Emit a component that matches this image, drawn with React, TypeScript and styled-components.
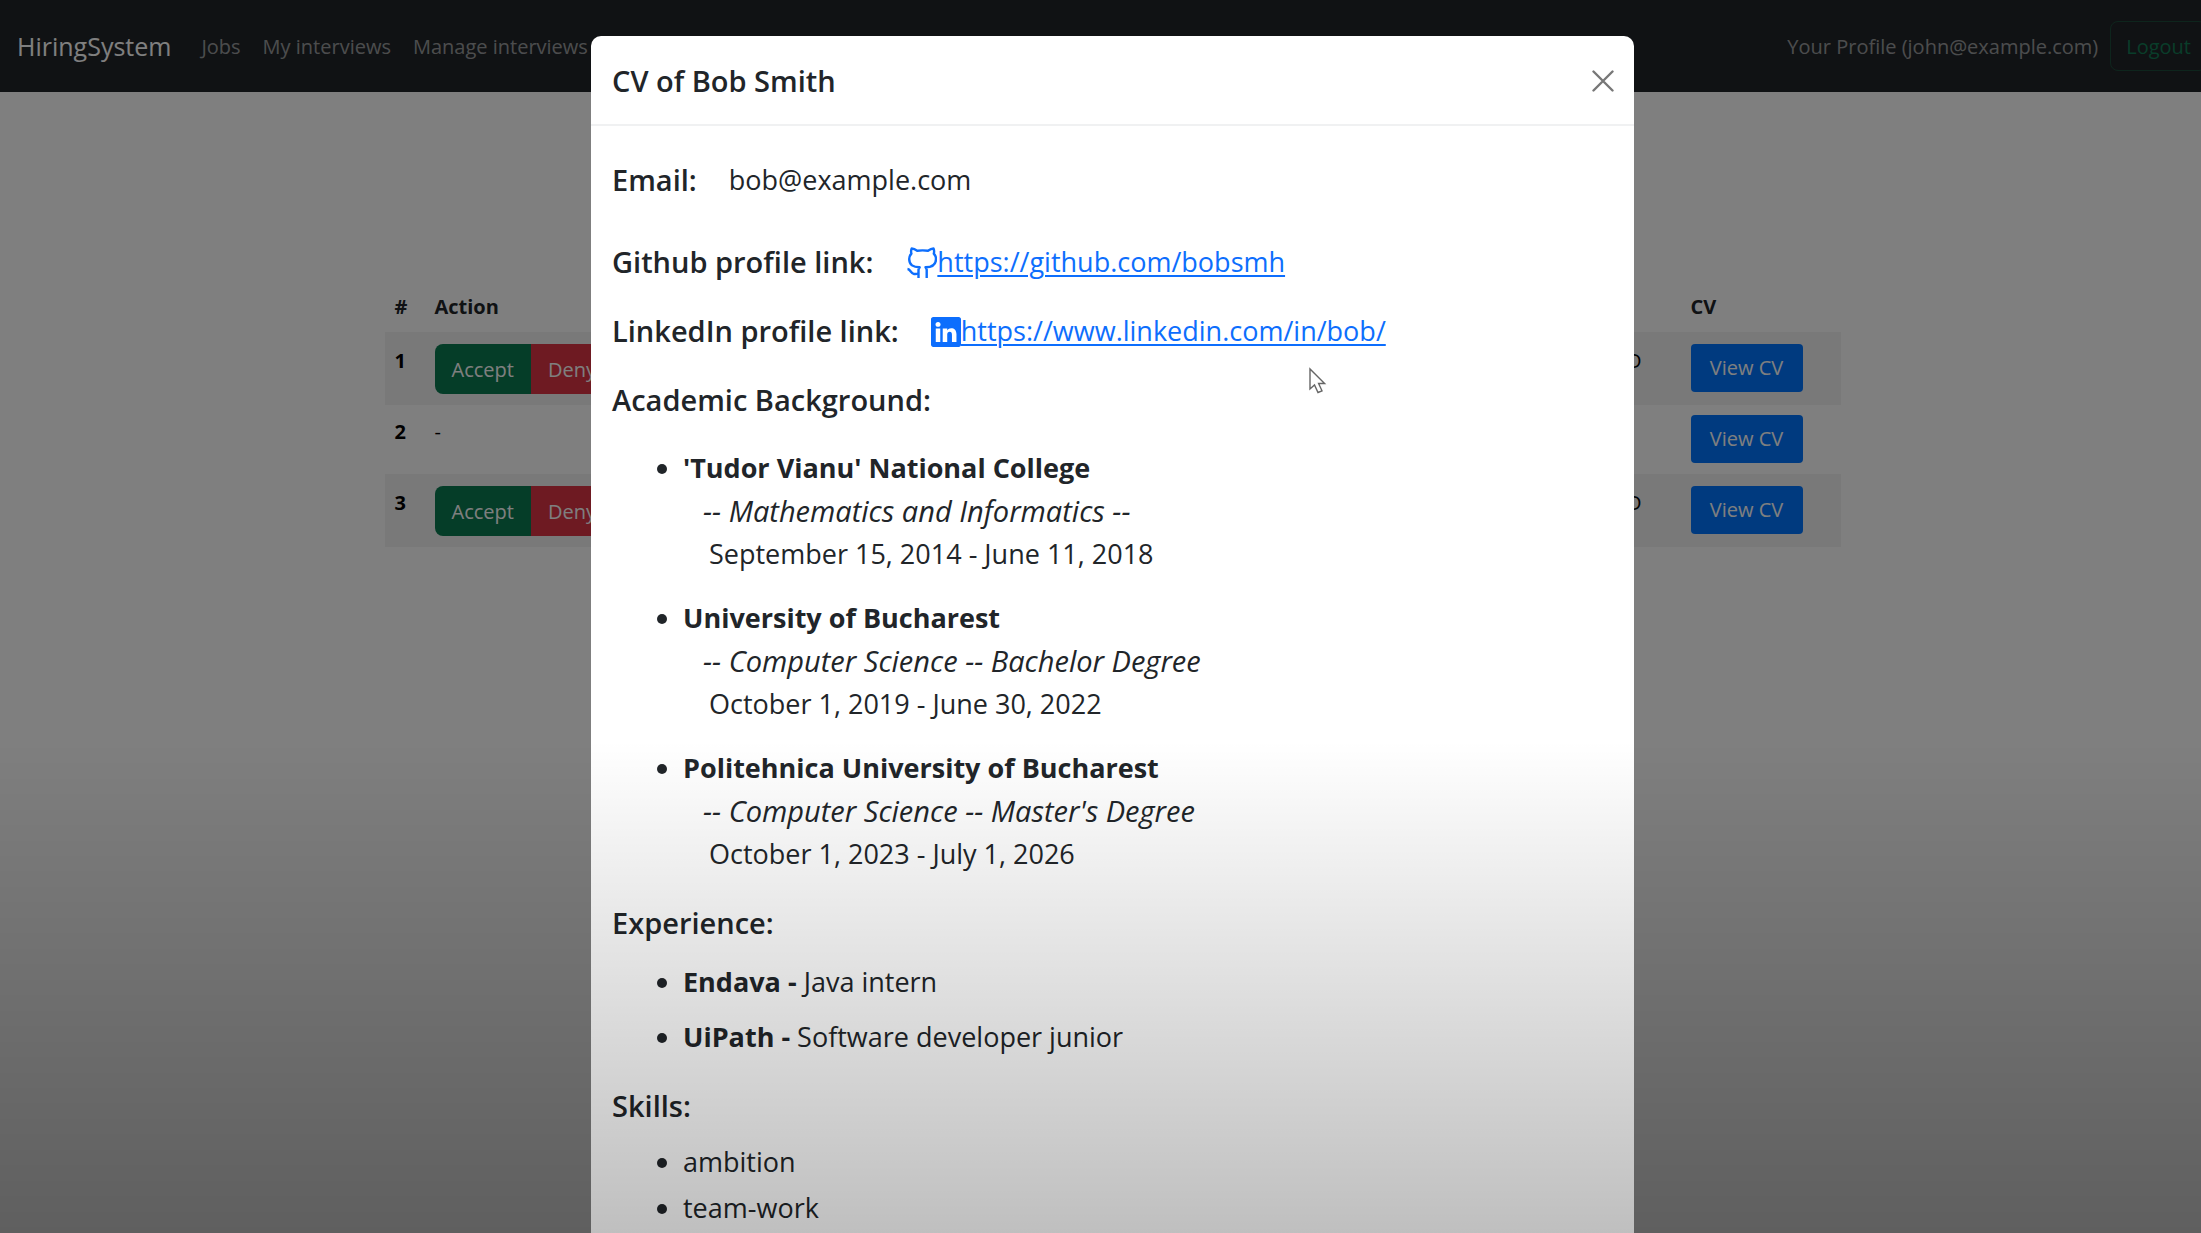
import React from "react";
import styled, { createGlobalStyle } from "styled-components";
import { BsLinkedin } from "react-icons/bs";

const GlobalStyle = createGlobalStyle`
  *, *::before, *::after { box-sizing: border-box; }
  html, body { margin: 0; overflow: hidden; background: #fff; }
  body {
    font-family: "Open Sans", "Noto Sans", sans-serif;
    font-size: 20px;
    line-height: 31px;
    color: #212529;
  }
  button { font: inherit; }
`;

const GUTTER = 24;

const Page = styled.div`
  width: calc(100% + ${GUTTER}px);
  min-height: 100vh;
`;

const Navbar = styled.nav`
  display: flex;
  align-items: center;
  height: 92px;
  padding: 0 18px 0 17px;
  background: #212529;
`;

const Brand = styled.a`
  margin-right: 30px;
  font-size: 25px;
  color: #fff;
  text-decoration: none;
`;

const NavLinks = styled.div`
  display: flex;
  flex: 1;
  gap: 22px;
`;

const NavLink = styled.a`
  color: rgba(255, 255, 255, 0.55);
  text-decoration: none;
`;

const LogoutButton = styled.button`
  height: 50px;
  margin-left: 12px;
  padding: 0 15px;
  border: 1px solid #1d4a3a;
  border-radius: 8px;
  background: transparent;
  color: #137a54;
`;

const Main = styled.main`
  display: flex;
  justify-content: center;
  padding-top: 189px;
`;

const Table = styled.table`
  width: 66%;
  max-width: 1456px;
  border-collapse: collapse;
  table-layout: fixed;
`;

const HeadCell = styled.th<{ $width?: number }>`
  width: ${(p) => (p.$width ? `${p.$width}px` : "auto")};
  height: 50px;
  padding: 10px;
  text-align: left;
  font-weight: 700;
`;

const Row = styled.tr<{ $striped?: boolean }>`
  height: ${(p) => (p.$striped ? 73 : 69)}px;
  background: ${(p) => (p.$striped ? "rgba(0, 0, 0, 0.05)" : "transparent")};
  color: #000;
  line-height: 34px;

  > * {
    padding: ${(p) => (p.$striped ? 12 : 10)}px 10px 0;
    vertical-align: top;
    text-align: left;
  }
`;

const CurrencyText = styled.div`
  padding-right: 29px;
  text-align: right;
`;

const ButtonGroup = styled.div`
  display: flex;
  width: fit-content;
  overflow: hidden;
  border-radius: 8px;
`;

const ActionButton = styled.button<{ $tone: "accept" | "deny" }>`
  height: 50px;
  padding: 2px 17px 0;
  border: 0;
  background: ${(p) => (p.$tone === "accept" ? "#0a7a50" : "#dc3545")};
  color: #fff;
`;

const ViewButton = styled.button`
  display: block;
  width: 112px;
  height: 48px;
  padding: 0;
  border: 0;
  border-radius: 4px;
  background: #0075ff;
  color: #fff;
`;

const Backdrop = styled.div`
  position: fixed;
  inset: 0 -${GUTTER}px 0 0;
  display: flex;
  justify-content: center;
  align-items: flex-start;
  padding-top: 36px;
  overflow: hidden;
  background: rgba(0, 0, 0, 0.5);
`;

const Dialog = styled.section`
  width: 100%;
  max-width: 1043px;
  border-radius: 10px;
  background: #fff;
`;

const DialogHeader = styled.header`
  display: flex;
  align-items: center;
  justify-content: space-between;
  padding: 22px 20px 20px 21px;
  border-bottom: 2px solid #f0f1f2;
`;

const DialogTitle = styled.h1`
  margin: 0;
  font-size: 29px;
  font-weight: 600;
  line-height: 46px;
`;

const CloseButton = styled.button`
  display: flex;
  padding: 0;
  border: 0;
  background: transparent;
  color: #777;
`;

const DialogBody = styled.div`
  padding: 32px 21px 60px;
  font-size: 27px;
  line-height: 43px;
`;

const Field = styled.div<{ $spaced?: boolean }>`
  display: flex;
  gap: 32px;
  margin-bottom: ${(p) => (p.$spaced ? 39 : 26)}px;
`;

const Label = styled.h2`
  margin: 0;
  font-size: 29px;
  font-weight: 600;
  line-height: 43px;
`;

const ProfileLink = styled.a`
  display: flex;
  align-items: center;
  color: #0d6efd;
  text-underline-offset: 3px;
  text-decoration-thickness: 2px;

  svg {
    flex: none;
    margin-top: 2px;
  }
`;

const List = styled.ul<{ $top: number; $gap: number }>`
  display: flex;
  flex-direction: column;
  gap: ${(p) => p.$gap}px;
  margin: ${(p) => p.$top}px 0 26px;
  padding-left: 71px;
`;

const Degree = styled.div`
  padding-left: 20px;
  font-size: 29px;
  font-style: italic;
`;

const Period = styled.div`
  padding-left: 26px;
`;

const BottomShade = styled.div`
  position: fixed;
  inset: 60% 0 0 0;
  background: linear-gradient(rgba(0, 0, 0, 0), rgba(0, 0, 0, 0.25));
  pointer-events: none;
`;

const Pointer = styled.svg`
  position: fixed;
  left: 1308px;
  top: 367px;
  pointer-events: none;
`;

const GithubIcon = () => (
  <svg width="32" height="32" viewBox="0 0 32 32" fill="none" stroke="currentColor" strokeWidth="2.400" strokeLinejoin="round" aria-hidden="true">
    <path d="M13.500 31v-8.500l1.200-2.200c-6.500 0-10.500-2.300-10.500-8.300 0-2.300.800-3.900 2.200-5.400-.500-1.600-.400-3.400.300-5.100 2 0 3.800 1 5.500 2.300 3.500-.5 7.300-.5 10.800 0 1.700-1.300 3.500-2.300 5.500-2.300.700 1.700.800 3.500.300 5.100 1.400 1.500 2.200 3.100 2.200 5.400 0 6-4 8.300-10.500 8.300l1.200 2.200v8.500" />
    <path d="M2.500 22c3 .3 3.500 4.700 6.500 5 1.800.2 3.200 0 4.500-.500" />
  </svg>
);

const candidates = [
  { id: 1, pending: true },
  { id: 2, pending: false },
  { id: 3, pending: true },
];

const schools = [
  {
    name: "'Tudor Vianu' National College",
    degree: "-- Mathematics and Informatics --",
    period: "September 15, 2014 - June 11, 2018",
  },
  {
    name: "University of Bucharest",
    degree: "-- Computer Science -- Bachelor Degree",
    period: "October 1, 2019 - June 30, 2022",
  },
  {
    name: "Politehnica University of Bucharest",
    degree: "-- Computer Science -- Master's Degree",
    period: "October 1, 2023 - July 1, 2026",
  },
];

const jobs = [
  { company: "Endava", role: "Java intern" },
  { company: "UiPath", role: "Software developer junior" },
];

const skills = ["ambition", "team-work"];

export default function App() {
  return (
    <>
      <GlobalStyle />
      <Page>
        <Navbar>
          <Brand href="#">HiringSystem</Brand>
          <NavLinks>
            <NavLink href="#jobs">Jobs</NavLink>
            <NavLink href="#interviews">My interviews</NavLink>
            <NavLink href="#manage">Manage interviews</NavLink>
          </NavLinks>
          <NavLink href="#profile">Your Profile (john@example.com)</NavLink>
          <LogoutButton type="button">Logout</LogoutButton>
        </Navbar>
        <Main>
          <Table>
            <thead>
              <tr>
                <HeadCell $width={40}>#</HeadCell>
                <HeadCell>Action</HeadCell>
                <HeadCell />
                <HeadCell $width={160}>CV</HeadCell>
              </tr>
            </thead>
            <tbody>
              {candidates.map(({ id, pending }) => (
                <Row key={id} $striped={pending}>
                  <th scope="row">{id}</th>
                  <td>
                    {pending ? (
                      <ButtonGroup>
                        <ActionButton type="button" $tone="accept">Accept</ActionButton>
                        <ActionButton type="button" $tone="deny">Deny</ActionButton>
                      </ButtonGroup>
                    ) : (
                      "-"
                    )}
                  </td>
                  <td>{pending && <CurrencyText>USD</CurrencyText>}</td>
                  <td>
                    <ViewButton type="button">View CV</ViewButton>
                  </td>
                </Row>
              ))}
            </tbody>
          </Table>
        </Main>
      </Page>

      <Backdrop>
        <Dialog role="dialog" aria-modal="true" aria-labelledby="cv-title">
          <DialogHeader>
            <DialogTitle id="cv-title">CV of Bob Smith</DialogTitle>
            <CloseButton type="button" aria-label="Close">
              <svg width="22" height="22" viewBox="0 0 22 22" fill="none" stroke="currentColor" strokeWidth="2.400" strokeLinecap="round">
                <path d="M1.500 1.500l19 19M20.500 1.500l-19 19" />
              </svg>
            </CloseButton>
          </DialogHeader>
          <DialogBody>
            <Field $spaced>
              <Label>Email:</Label>
              <span>bob@example.com</span>
            </Field>
            <Field>
              <Label>Github profile link:</Label>
              <ProfileLink href="https://github.com/bobsmh">
                <GithubIcon />
                https://github.com/bobsmh
              </ProfileLink>
            </Field>
            <Field>
              <Label>LinkedIn profile link:</Label>
              <ProfileLink href="https://www.linkedin.com/in/bob/">
                <BsLinkedin size={30} />
                https://www.linkedin.com/in/bob/
              </ProfileLink>
            </Field>

            <Label>Academic Background:</Label>
            <List $top={25} $gap={21}>
              {schools.map((school) => (
                <li key={school.name}>
                  <strong>{school.name}</strong>
                  <Degree>{school.degree}</Degree>
                  <Period>{school.period}</Period>
                </li>
              ))}
            </List>

            <Label>Experience:</Label>
            <List $top={16} $gap={12}>
              {jobs.map((job) => (
                <li key={job.company}>
                  <strong>{job.company} -</strong> {job.role}
                </li>
              ))}
            </List>

            <Label>Skills:</Label>
            <List $top={13} $gap={3}>
              {skills.map((skill) => (
                <li key={skill}>{skill}</li>
              ))}
            </List>
          </DialogBody>
        </Dialog>
      </Backdrop>

      <BottomShade />
      <Pointer width="20" height="28" viewBox="0 0 20 28" aria-hidden="true">
        <path d="M2 2v20l4.500-4 3.500 7.500 4-1.700-3.400-7.300h6z" fill="#fff" stroke="#666" strokeWidth="1.400" />
      </Pointer>
    </>
  );
}
